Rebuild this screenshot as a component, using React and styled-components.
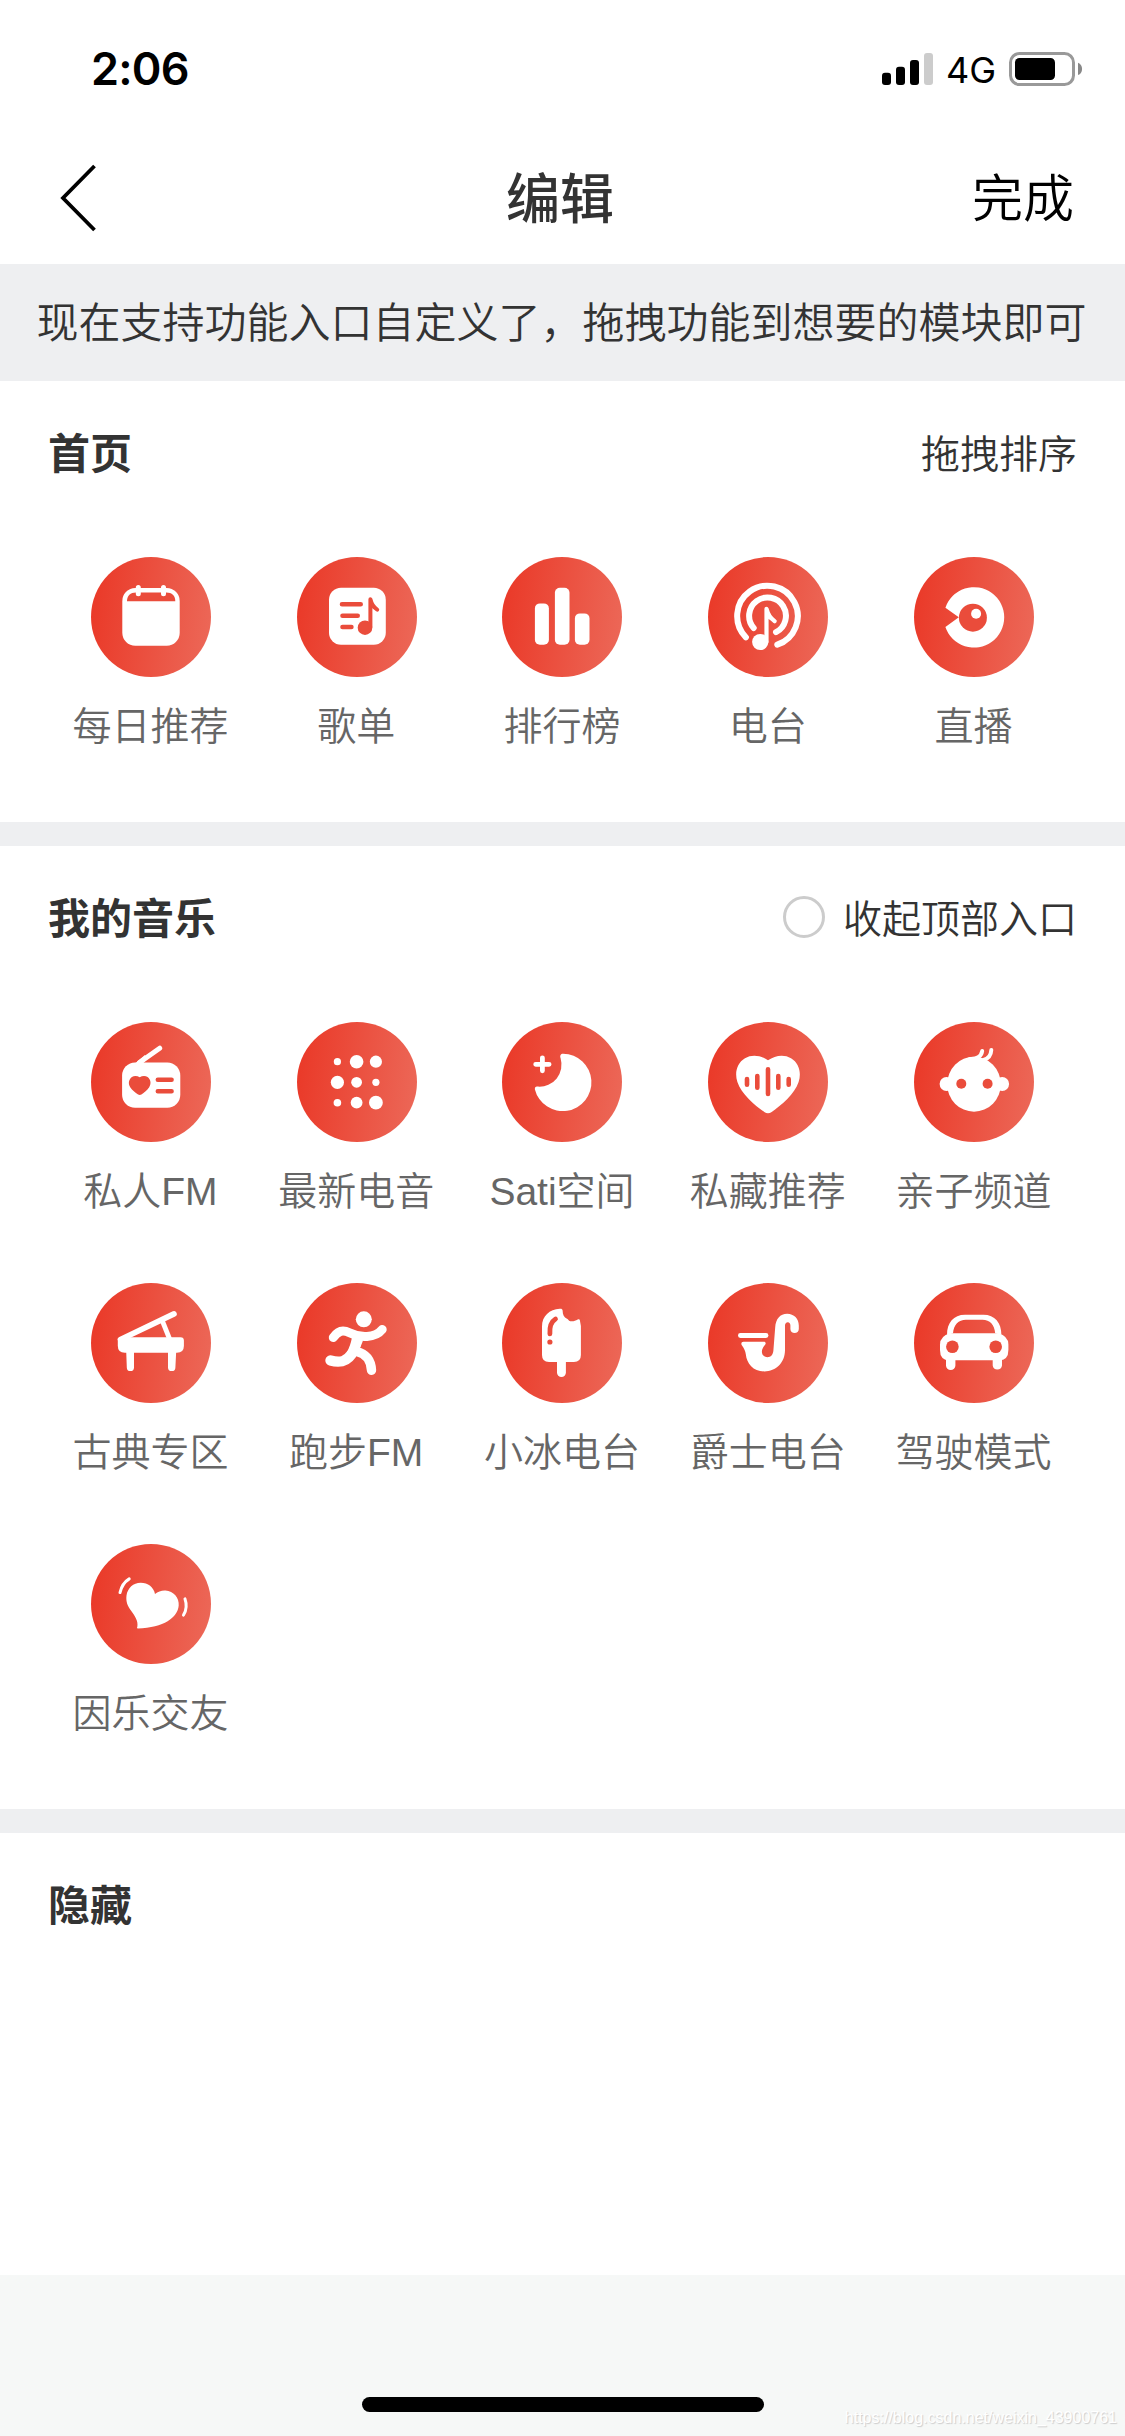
import React, { useState } from 'react';
import styled, { createGlobalStyle } from 'styled-components';

const RED = '#ea4c3b';

const CalendarIcon = () => (
  <>
    <rect x="31.3" y="31" width="57.4" height="57.7" rx="13" fill="#fff" />
    <path d="M36 44.2C36 38.6 39.4 35.4 45 35.4H75.3C80.9 35.4 84.3 38.6 84.3 44.2Z" fill={RED} />
    <path d="M47.3 30.4V36.7M72.5 30.4V36.7" stroke="#fff" strokeWidth="5" strokeLinecap="round" />
  </>
);

const PlaylistIcon = () => (
  <>
    <rect x="32" y="30.7" width="56.8" height="57" rx="12" fill="#fff" />
    <path d="M45 47.3H63.7M45.5 58.7H60.7M45.5 70H54.4" stroke={RED} strokeWidth="4.6" strokeLinecap="round" />
    <circle cx="68" cy="70.7" r="7.3" fill={RED} />
    <path d="M73.4 70V42.3C74.6 47.5 77 50.6 80.2 52.6" fill="none" stroke={RED} strokeWidth="4" strokeLinecap="round" strokeLinejoin="round" />
    <path d="M73.4 42L78 51L74.5 49Z" fill={RED} />
  </>
);

const RankIcon = () => (
  <g fill="#fff">
    <rect x="32.9" y="46.4" width="14" height="41.3" rx="5" />
    <rect x="52.9" y="30.7" width="14.6" height="57" rx="5" />
    <rect x="72.9" y="56.4" width="14.6" height="31.3" rx="5" />
  </g>
);

const PodcastIcon = () => (
  <>
    <path d="M37.9 80.3A30.3 30.3 0 1 1 69.3 87.7" fill="none" stroke="#fff" strokeWidth="6" strokeLinecap="round" />
    <path d="M45.7 71A18.4 18.4 0 1 1 68 75.2" fill="none" stroke="#fff" strokeWidth="6" strokeLinecap="round" />
    <circle cx="52.2" cy="85" r="8.1" fill="#fff" />
    <path d="M58.5 85V51.8C60 57.5 62.8 61.7 66.7 64.2" fill="none" stroke="#fff" strokeWidth="4.2" strokeLinecap="round" strokeLinejoin="round" />
    <path d="M58.5 51L65.4 64.5L59.5 61.5Z" fill="#fff" />
  </>
);

const LiveIcon = () => (
  <>
    <path d="M31.4 50.7A30.2 30.2 0 1 1 31.4 70L44.8 60.3Z" fill="#fff" />
    <circle cx="58.9" cy="60.7" r="14" fill={RED} />
    <circle cx="62.1" cy="56.7" r="5" fill="#fff" />
  </>
);

const RadioIcon = () => (
  <>
    <rect x="31.1" y="40.4" width="58.2" height="45.3" rx="13" fill="#fff" />
    <path d="M48.5 40.5L68.7 26.2" stroke="#fff" strokeWidth="5" strokeLinecap="round" />
    <path d="M44.5 41L54 33L56 37.5L52 41Z" fill="#fff" />
    <path d="M48.7 55.3C51.2 53.6 54.4 53.4 56.6 55.1C59.9 57.7 60.4 61.6 58.2 65.3C56.3 68.5 52.4 71.3 50.4 72.6C49.3 73.2 48.2 73.2 47.1 72.6C45.1 71.3 41.1 68.5 39.2 65.3C37 61.6 37.6 57.7 40.9 55.1C43.1 53.4 46.2 53.6 48.7 55.3Z" fill={RED} />
    <path d="M66.8 57.7H80.6M66.8 69.3H80.6" stroke={RED} strokeWidth="4.5" strokeLinecap="round" />
  </>
);

const DotsIcon = () => (
  <g fill="#fff">
    <circle cx="40.4" cy="39.7" r="3.6" />
    <circle cx="59.6" cy="39.7" r="6.8" />
    <circle cx="78.9" cy="39.7" r="6.1" />
    <circle cx="40.4" cy="60.3" r="6.6" />
    <circle cx="59.6" cy="60.3" r="5.4" />
    <circle cx="78.9" cy="60.3" r="3.6" />
    <circle cx="40.4" cy="80.7" r="3.8" />
    <circle cx="59.6" cy="80.7" r="5.9" />
    <circle cx="78.9" cy="80.7" r="6.9" />
  </g>
);

const MoonIcon = () => (
  <>
    <path d="M61.2 31.7A28.7 28.7 0 1 1 32.9 67.4C32.6 65.2 33.9 64 36 64.6A22 22 0 0 0 58.6 36.3C57.6 33.4 58.8 31.6 61.2 31.7Z" fill="#fff" />
    <path d="M40.4 35.8V48.8M33.7 42.3H47.1" stroke="#fff" strokeWidth="4.8" strokeLinecap="round" />
  </>
);

const HeartWaveIcon = () => (
  <>
    <path d="M60 38.3C53 33.3 44 32 37 36.2C28.8 41.1 26.4 51 29.4 60C33.4 72 46.5 83.2 56.3 89.9C58.9 91.7 61.1 91.7 63.7 89.9C73.5 83.2 86.6 72 90.6 60C93.6 51 91.2 41.1 83 36.2C76 32 67 33.3 60 38.3Z" fill="#fff" />
    <path d="M39 57V62.7M49.3 54V65.7M60 47.3V72M70.3 54V65.7M80.7 57V62.7" stroke={RED} strokeWidth="4.6" strokeLinecap="round" />
  </>
);

const BabyIcon = () => (
  <>
    <ellipse cx="60" cy="62.2" rx="26.8" ry="27.5" fill="#fff" />
    <circle cx="32.5" cy="62" r="6.9" fill="#fff" />
    <circle cx="88.2" cy="62" r="6.9" fill="#fff" />
    <path d="M56 37C62.5 37 67.3 34.5 68.2 29M69.5 38C74.2 36.8 77 33.5 77.3 28" fill="none" stroke="#fff" strokeWidth="4" strokeLinecap="round" />
    <circle cx="47.3" cy="61.7" r="5" fill={RED} />
    <circle cx="73.6" cy="61.7" r="5" fill={RED} />
  </>
);

const PianoIcon = () => (
  <>
    <path d="M26.8 56.5L28.5 54.3H89.5Q92.9 54.3 92.9 57.7V62.7Q92.9 69.7 85.9 69.7H33.8Q26.8 69.7 26.8 62.7Z" fill="#fff" />
    <path d="M35.2 68H43V84.4A3.6 3.6 0 0 1 35.8 84.4ZM77 68H85.2L84.4 84.4A3.6 3.6 0 0 1 77 84.4Z" fill="#fff" />
    <path d="M29.5 56.5L83 30.9" stroke="#fff" strokeWidth="5.6" strokeLinecap="round" />
    <path d="M71.4 38L78.6 56" stroke="#fff" strokeWidth="4.8" />
  </>
);

const RunnerIcon = () => (
  <>
    <circle cx="66.8" cy="36.3" r="8" fill="#fff" />
    <g fill="none" stroke="#fff" strokeLinecap="round" strokeLinejoin="round">
      <path d="M36.3 54.6C41 47.5 46 46.6 52.5 49.8C58 52.5 64 53.9 70 53.5C77.5 53 82 50.5 85.2 46.5" strokeWidth="9" />
      <path d="M60.2 55C59 61 57.5 66.5 54.5 71.3C49.5 78.6 43 80.2 33.5 77.5" strokeWidth="10.4" />
      <path d="M59.5 68.5C69 70.5 74 77.5 74.5 87.3" strokeWidth="9.4" />
    </g>
    <path d="M55.8 54L66 57.5L63.3 64.5L56 68Z" fill="#fff" />
  </>
);

const PopsicleIcon = () => (
  <>
    <path d="M40 43.5C40 33 47.5 26.4 57.8 25.8C59.6 25.7 60.5 26 60.6 27.6C60.7 32 62 34.6 65 35.8C66.4 36.4 66.4 37.9 68.2 38.2C71.5 38.7 73.4 37.6 75.7 36.5C77 35.9 78 36.6 78 38L78.9 43V72Q78.9 79 71.9 79H47Q40 79 40 72Z" fill="#fff" />
    <path d="M55 77H63.9V89.6A4.4 4.4 0 0 1 55 89.6Z" fill="#fff" />
    <path d="M47.9 50.8C47.4 43.5 49.2 38.7 53.5 36" fill="none" stroke={RED} strokeWidth="4.8" strokeLinecap="round" />
    <circle cx="47.9" cy="59" r="2.6" fill={RED} />
  </>
);

const SaxIcon = () => (
  <>
    <path d="M32.4 52.5H58" stroke="#fff" strokeWidth="4.8" strokeLinecap="round" />
    <path d="M35.4 58.8H55.8C57.6 58.8 58.3 60.4 57.1 61.8C54.8 64.6 53.8 66.4 53.9 69C54.1 72.2 56.3 74.2 59.3 74.2C63 74.2 65 71.8 65.4 67.5L67.2 44.3C67.8 36 72 30.8 79.2 30.8C86 30.8 90.8 35.8 90.8 42.5V46C90.8 48.5 88.9 50.1 86.6 50.1C84.3 50.1 82.4 48.5 82.4 46V42.6C82.4 40.6 81.4 39.3 79.8 39.3C78.1 39.3 77 40.6 77 42.6V67C77 79.7 68 88.4 56.3 88.4C45.2 88.4 38.8 80.6 37.8 71.2C37.4 68.2 36.3 65.8 34 62.6C32.7 60.7 33.4 58.8 35.4 58.8Z" fill="#fff" />
  </>
);

const CarIcon = () => (
  <>
    <path d="M33 52C33 39.5 39.5 31.7 51 31.7H69.4C80.9 31.7 87.4 39.5 87.4 52L81.2 50.2C80.4 41.5 76 36.7 68.4 36.7H52C44.4 36.7 39.8 41.5 39 50.2Z" fill="#fff" />
    <path d="M36 50.2H84.3Q94.4 53 94.4 61.5V67Q94.4 77.3 85 77.3H35.4Q26 77.3 26 67V61.5Q26 53 36 50.2Z" fill="#fff" />
    <path d="M32 75H41.4V82.4A4.7 4.7 0 0 1 32 82.4ZM78.7 75H88V82.4A4.7 4.7 0 0 1 78.7 82.4Z" fill="#fff" />
    <circle cx="38.4" cy="63.7" r="6.3" fill={RED} />
    <circle cx="81.7" cy="63.7" r="6.3" fill={RED} />
  </>
);

const BeatHeartIcon = () => (
  <>
    <path d="M64 50C67 47.4 70.5 46.2 74.5 46.4C82.5 46.9 88.4 53.8 87.7 61.5C86.7 73.5 73 83.8 46.8 84.4C46 84.4 45.8 83.8 46.3 83C47.6 77 43.5 71.5 40.3 67C36.8 62.3 34.7 58 35.5 51.5C36.5 44 42.3 38.7 49.7 38.7C57 38.7 62.8 43.2 64 50Z" fill="#fff" />
    <path d="M38.2 34.9C33.5 37.8 30.4 42.5 29 48.6M94 54.9C96 60.5 95.3 66.3 92.5 71.1" fill="none" stroke="#fff" strokeWidth="3" strokeLinecap="round" />
  </>
);

const homeItems = [
  { name: '每日推荐', icon: CalendarIcon },
  { name: '歌单', icon: PlaylistIcon },
  { name: '排行榜', icon: RankIcon },
  { name: '电台', icon: PodcastIcon },
  { name: '直播', icon: LiveIcon },
];

const musicItems = [
  { name: '私人FM', icon: RadioIcon },
  { name: '最新电音', icon: DotsIcon },
  { name: 'Sati空间', icon: MoonIcon },
  { name: '私藏推荐', icon: HeartWaveIcon },
  { name: '亲子频道', icon: BabyIcon },
  { name: '古典专区', icon: PianoIcon },
  { name: '跑步FM', icon: RunnerIcon },
  { name: '小冰电台', icon: PopsicleIcon },
  { name: '爵士电台', icon: SaxIcon },
  { name: '驾驶模式', icon: CarIcon },
  { name: '因乐交友', icon: BeatHeartIcon },
];

const EntryGrid = ({ items }) => (
  <Grid>
    {items.map(({ name, icon: Icon }) => (
      <Entry key={name}>
        <Disc>
          <svg width="120" height="120" viewBox="0 0 120 120">
            <Icon />
          </svg>
        </Disc>
        <Label>{name}</Label>
      </Entry>
    ))}
  </Grid>
);

const App = () => {
  const [collapsed, setCollapsed] = useState(false);

  return (
    <Page lang="zh-CN">
      <GlobalStyle />
      <StatusBar>
        <Time>2:06</Time>
        <Status>
          <svg width="51" height="34" viewBox="0 0 51 34">
            <rect x="0" y="20.7" width="9" height="12.3" rx="3" />
            <rect x="14" y="14.7" width="9" height="18.3" rx="3" />
            <rect x="28" y="8" width="9" height="25" rx="3" />
            <rect x="42" y="1" width="9" height="32" rx="3" fill="#ccc" />
          </svg>
          <Network>4G</Network>
          <svg width="74" height="34" viewBox="0 0 74 34">
            <rect x="1.5" y="1.5" width="63" height="31" rx="9" fill="none" stroke="#999" strokeWidth="3" />
            <rect x="6" y="6" width="40" height="22" rx="4.5" />
            <path d="M69 10.8C74.4 12.6 74.4 21.2 69 23Z" fill="#888" />
          </svg>
        </Status>
      </StatusBar>
      <NavBar>
        <Back aria-label="返回">
          <svg width="38" height="68" viewBox="0 0 38 68">
            <path d="M34.5 2L3 34L34.5 66" fill="none" stroke="#000" strokeWidth="3.8" />
          </svg>
        </Back>
        <Title>编辑</Title>
        <Done>完成</Done>
      </NavBar>
      <Tip>现在支持功能入口自定义了，拖拽功能到想要的模块即可</Tip>

      <Section>
        <SectionHead>
          <h2>首页</h2>
          <Hint>
            <span>拖拽排序</span>
          </Hint>
        </SectionHead>
        <EntryGrid items={homeItems} />
      </Section>

      <Section>
        <SectionHead>
          <h2>我的音乐</h2>
          <Hint onClick={() => setCollapsed(!collapsed)}>
            <Radio $checked={collapsed} />
            <span>收起顶部入口</span>
          </Hint>
        </SectionHead>
        <EntryGrid items={musicItems} />
      </Section>

      <HiddenSection>
        <SectionHead>
          <h2>隐藏</h2>
        </SectionHead>
      </HiddenSection>

      <Footer>
        <HomeBar />
        <Watermark>https://blog.csdn.net/weixin_43900761</Watermark>
      </Footer>
    </Page>
  );
};

const GlobalStyle = createGlobalStyle`
* {
  box-sizing: border-box;
}

body {
  margin: 0;
  background: #f6f8f7;
}

svg {
  display: block;
}
`

const Page = styled.div`
width: 1125px;
height: 2436px;
display: flex;
flex-direction: column;
overflow: hidden;
background: #fff;
color: #333;
font-family: "Liberation Sans", "Noto Sans CJK SC", sans-serif;
font-weight: 350;
`

const StatusBar = styled.div`
height: 132px;
padding: 5px 42px 0 91px;
display: flex;
justify-content: space-between;
align-items: center;
color: #000;
font-family: Inter, sans-serif;
`

const Time = styled.span`
padding-top: 1px;
font-size: 45px;
font-weight: 600;
line-height: 60px;
letter-spacing: -0.8px;
`

const Status = styled.div`
display: flex;
align-items: center;
`

const Network = styled.span`
width: 76px;
padding-top: 2px;
text-align: center;
font-size: 36px;
font-weight: 400;
line-height: 40px;
`

const NavBar = styled.div`
height: 132px;
padding: 0 51px 0 60px;
display: grid;
grid-template-columns: 1fr auto 1fr;
align-items: center;
`

const Back = styled.button`
justify-self: start;
padding: 0;
border: 0;
background: none;
`

const Title = styled.h1`
margin: 3px 14px 0 0;
font-size: 54px;
font-weight: 500;
line-height: 80px;
`

const Done = styled.span`
margin-top: 4px;
justify-self: end;
color: #000;
font-size: 51px;
line-height: 80px;
`

const Tip = styled.div`
height: 117px;
padding: 0 2px 6px 0;
display: flex;
align-items: center;
justify-content: center;
background: #eeeff1;
font-size: 42px;
white-space: nowrap;
`

const Section = styled.section`
padding: 0 48px 4px;
border-bottom: 24px solid #eeeff1;
`

const HiddenSection = styled.section`
flex: 1;
padding: 0 48px;
`

const SectionHead = styled.div`
height: 176px;
padding-top: 41px;
display: flex;
justify-content: space-between;
align-items: flex-start;

h2 {
  margin: 3px 0 0;
  font-size: 42px;
  font-weight: 700;
  line-height: 60px;
}
`

const Hint = styled.div`
height: 60px;
display: flex;
align-items: center;
font-size: 39px;
line-height: 60px;

span:last-child {
  padding-top: 5px;
}
`

const Radio = styled.span`
width: 42px;
height: 42px;
margin-right: 18px;
border: 3px solid #ccc;
border-radius: 50%;
background: ${props => (props.$checked ? RED : '#fff')};
`

const Grid = styled.div`
display: grid;
grid-template-columns: repeat(5, 1fr);
`

const Entry = styled.div`
height: 261px;
display: flex;
flex-direction: column;
align-items: center;
`

const Disc = styled.div`
width: 120px;
height: 120px;
border-radius: 50%;
background: linear-gradient(97deg, #ea3a29 5%, #ec6858 98%);
`

const Label = styled.span`
margin: 20px 1px 0 0;
color: #666;
font-size: 39px;
line-height: 60px;
white-space: nowrap;
`

const Footer = styled.div`
position: relative;
height: 161px;
padding-bottom: 24px;
display: flex;
align-items: flex-end;
justify-content: center;
background: #f6f8f7;
`

const HomeBar = styled.div`
width: 402px;
height: 15px;
border-radius: 8px;
background: #000;
`

const Watermark = styled.span`
position: absolute;
right: 8px;
bottom: 8px;
color: #fff;
font-size: 16px;
font-weight: 400;
line-height: 20px;
text-shadow: 1px 1px 1px #ccc;
`

export default App;
